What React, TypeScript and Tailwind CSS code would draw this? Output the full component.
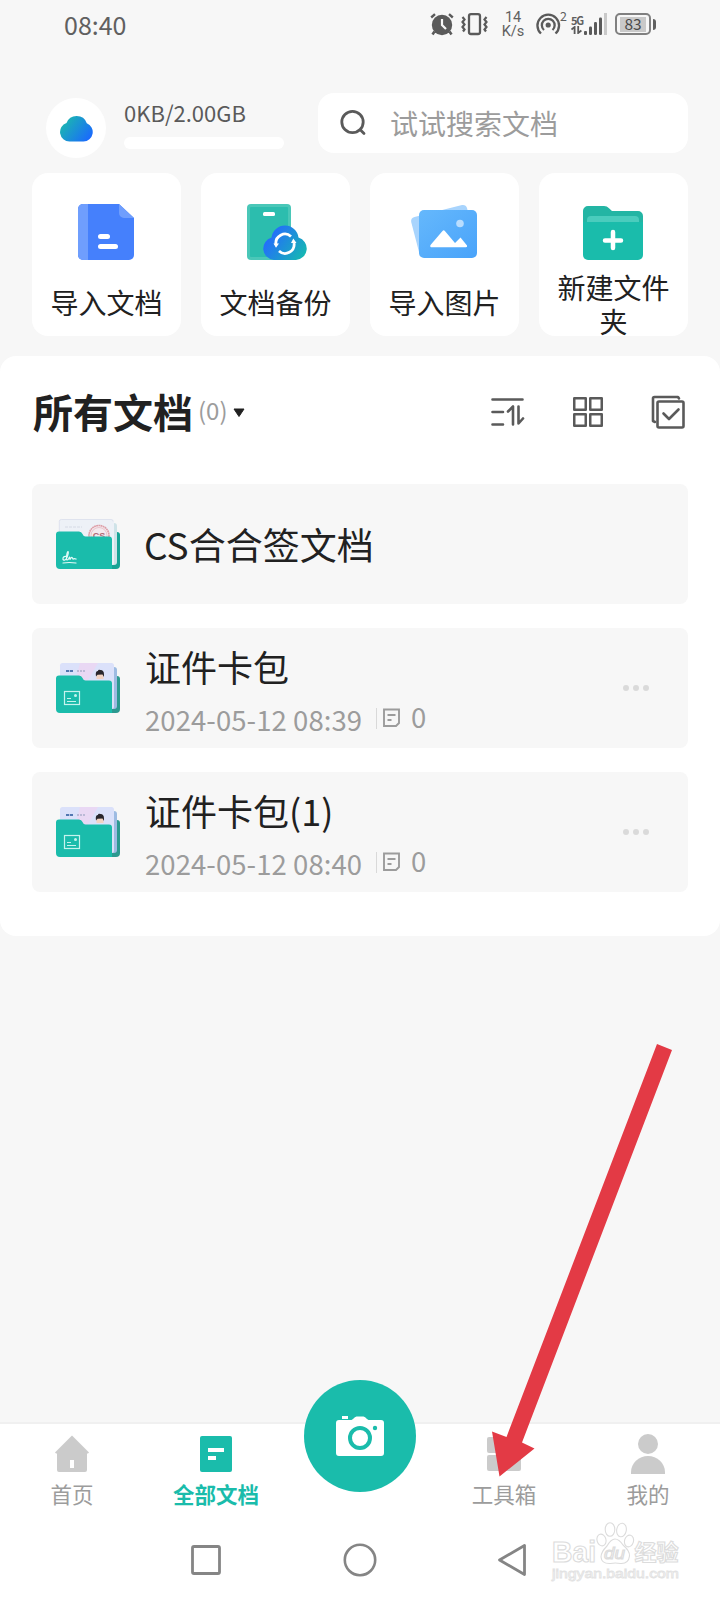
import type { ReactNode } from 'react';

const GREEN = '#1abcab';

function StatusBar() {
  return (
    <header className="flex h-12 items-center justify-between pl-16 pr-[64px] text-[#606060]">
      <span className="text-[25px] leading-none">08:40</span>
      <div className="flex h-12 items-center">
        <svg width="24" height="24" viewBox="0 0 24 24" fill="none" stroke="#5a5a5a">
          <circle cx="12" cy="13" r="10.2" fill="#5a5a5a" stroke="none" />
          <path d="M1.2 5.5 5 2.2M19 2.2l3.8 3.3" strokeWidth="2.4" />
          <path d="m4.5 19.5-2 3M19.5 19.5l2 3" strokeWidth="2.6" />
          <path d="M12 7v6l4 4" stroke="#f7f7f7" strokeWidth="2.2" />
        </svg>
        <svg className="ml-[7px]" width="27" height="24" viewBox="0 0 27 24" fill="none" stroke="#5a5a5a" strokeWidth="2.3">
          <rect x="8" y="2.2" width="11" height="19.8" rx="2" />
          <path d="m1.500 5 2 2.500L1.500 10l2 2.500L1.500 15l2 2.500L2 19.500M25.500 5l-2 2.500 2 2.500-2 2.500 2 2.500-2 2.500 1.500 2" strokeWidth="2.2" />
        </svg>
        <div className="ml-[13px] flex w-[24px] flex-col items-center pt-0.5 font-[Roboto,sans-serif] text-[14.5px] leading-[14px]">
          <span>14</span>
          <span className="whitespace-nowrap">K/s</span>
        </div>
        <svg className="ml-[11px]" width="25" height="24" viewBox="0 0 25 24" fill="none" stroke="#5a5a5a" strokeWidth="2.3">
          <path d="M5 21.5A10.8 10.8 0 1 1 19.5 21.5" />
          <path d="M8 18A6.4 6.4 0 1 1 16.5 18" />
          <circle cx="12.2" cy="13" r="2.6" fill="#5a5a5a" stroke="none" />
        </svg>
        <span className="-ml-px -mt-4 text-[12.5px] leading-none">2</span>
        <div className="ml-[4px] flex w-[13px] flex-col">
          <span className="text-[11px] font-bold leading-[12px] tracking-[-1.2px]">5G</span>
          <svg width="12" height="8" viewBox="0 0 12 8" fill="none" stroke="#5a5a5a" strokeWidth="1.8">
            <path d="M.5 3.5 3.6 1v7M7.2 0v7l3.2-2.5" />
          </svg>
        </div>
        <svg width="23" height="24" viewBox="0 0 23 24" fill="#5a5a5a">
          <rect x="0" y="19" width="3" height="4" rx="1" />
          <rect x="5" y="14.5" width="3" height="8.5" rx="1.2" />
          <rect x="10" y="10" width="3" height="13" rx="1.2" />
          <rect x="15" y="5.500" width="3" height="17.500" rx="1.2" />
          <rect x="20" y="1" width="3" height="22" fill="#c9c9c9" />
        </svg>
        <div className="ml-2 flex h-[22px] w-[36px] items-center justify-center rounded-[5px] border-2 border-[#808080]">
          <span className="flex h-[15px] w-[26px] items-center justify-center bg-[#c9c9c9] text-[15.5px] leading-none text-[#484848]">
            83
          </span>
        </div>
        <div className="ml-0.5 h-[11px] w-[3px] rounded-r bg-[#606060]" />
      </div>
    </header>
  );
}

function TopRow() {
  return (
    <div className="mt-[45px] flex h-[60px] items-start pl-[46px] pr-8">
      <div className="mt-[5px] flex size-[60px] shrink-0 items-center justify-center rounded-full bg-white">
        <svg className="-mt-px" width="33" height="28" viewBox="0 0 33 28">
          <defs>
            <linearGradient id="cloud" x1="0" y1="0.2" x2="1" y2="0.8">
              <stop offset="0" stopColor="#1bbcab" />
              <stop offset="1" stopColor="#1a68ff" />
            </linearGradient>
          </defs>
          <path d="M9.500 27.500A9.500 9.500 0 0 1 6.500 9a10.800 10.800 0 0 1 20.300 0.200A9.500 9.500 0 0 1 23.500 27.500Z" fill="url(#cloud)" />
        </svg>
      </div>
      <div className="ml-[18px] w-[160px]">
        <div className="mt-[7px] whitespace-nowrap text-[22px] leading-6 text-[#5a5a5a]">0KB/2.00GB</div>
        <div className="mt-[13px] h-3 rounded-full bg-white" />
      </div>
      <div className="ml-[34px] flex h-[60px] flex-1 items-center rounded-2xl bg-white pl-[22px]">
        <svg width="28" height="28" viewBox="0 0 28 28" fill="none" stroke="#5a5a5a" strokeWidth="2.8" strokeLinecap="round">
          <circle cx="12.5" cy="13" r="10.7" />
          <path d="m20.5 21 3.5 3.5" />
        </svg>
        <span className="ml-[22px] text-[28px] leading-none text-[#9c9c9c]">试试搜索文档</span>
      </div>
    </div>
  );
}

function ImportDocIcon() {
  return (
    <svg width="64" height="64" viewBox="0 0 64 64">
      <path d="M9 4h36l15 14v37a5 5 0 0 1-5 5H9a5 5 0 0 1-5-5V9a5 5 0 0 1 5-5Z" fill="#4580fc" />
      <path d="M9 4h5v56H9a5 5 0 0 1-5-5V9a5 5 0 0 1 5-5ZM45 4v9a5 5 0 0 0 5 5h10Z" fill="#6f9efd" />
      <rect x="24" y="34" width="12" height="5" rx="2.5" fill="#fff" />
      <rect x="24" y="44" width="20" height="5" rx="2.5" fill="#fff" />
    </svg>
  );
}

function BackupIcon() {
  return (
    <svg width="64" height="64" viewBox="0 0 64 64">
      <defs>
        <linearGradient id="backup" x1="0.1" y1="0.3" x2="1" y2="0.8">
          <stop offset="0" stopColor="#246bfd" />
          <stop offset="1" stopColor="#16b8b2" />
        </linearGradient>
      </defs>
      <rect x="4" y="4" width="44" height="56" rx="4" fill="#4ac7b8" />
      <rect x="7" y="7" width="38" height="50" rx="1" fill="#2cbdae" />
      <rect x="20" y="12" width="12" height="4" rx="1.5" fill="#fff" />
      <path d="M31 60A11.5 11.5 0 0 1 28.5 37.5a13.6 13.6 0 0 1 27 0A11.5 11.5 0 0 1 53 60Z" fill="url(#backup)" />
      <g fill="none" stroke="#fff" strokeWidth="2.8">
        <path d="M48 36.500A9 9 0 0 0 33 44.500M36 51A9 9 0 0 0 51 43" />
      </g>
      <path d="M30.500 43.500h5.500l-3 4.200ZM48 43h5.500l-3.200-4.500Z" fill="#fff" />
    </svg>
  );
}

function ImportImageIcon() {
  return (
    <svg width="72" height="64" viewBox="0 0 72 64">
      <defs>
        <linearGradient id="photo" x1="0" y1="0" x2="1" y2="1">
          <stop offset="0" stopColor="#65b8fc" />
          <stop offset="1" stopColor="#49a3fa" />
        </linearGradient>
      </defs>
      <path d="M11 52 3.200 22Q2.500 18 6.500 17L54 5Q58 4.500 59 8l2 8v36Z" fill="#a8d4fd" />
      <path d="M16 10h48a5 5 0 0 1 5 5v38a5 5 0 0 1-5 5H16a5 5 0 0 1-5-5V15a5 5 0 0 1 5-5Z" fill="url(#photo)" />
      <circle cx="52" cy="23.500" r="3.800" fill="#b9ddfe" />
      <path d="M22.500 45 34.500 31q1.200-1.500 2.400 0L47 43l5.500-5.500L59 45.500q.6 1.800-1 1.800H24q-2.500 0-1.500-2.300Z" fill="#fff" />
    </svg>
  );
}

function NewFolderIcon() {
  return (
    <svg width="64" height="64" viewBox="0 0 64 64">
      <path d="M7 6h16q3 0 5 2.200L31 11h26a5 5 0 0 1 5 5v20H2V11a5 5 0 0 1 5-5Z" fill="#23b5a4" />
      <path d="M10 16h44a4 4 0 0 1 4 4v4H6v-4a4 4 0 0 1 4-4Z" fill="#4accbd" />
      <path d="M2 22h60v33a5 5 0 0 1-5 5H7a5 5 0 0 1-5-5Z" fill={GREEN} />
      <path d="M32 32v16M24 40.500h16" stroke="#fff" strokeWidth="4.5" strokeLinecap="round" />
    </svg>
  );
}

function QuickCard({ icon, label, wrap }: { icon: ReactNode; label: string; wrap?: boolean }) {
  return (
    <div className="flex h-[163px] flex-col items-center rounded-2xl bg-white pt-[27px] text-[#212121]">
      <div className="flex h-16 items-center justify-center pr-px">{icon}</div>
      <div className={`w-[120px] text-center text-[28px] leading-[34px] ${wrap ? 'mt-[6px]' : 'mt-[21px]'}`}>{label}</div>
    </div>
  );
}

function SortIcon() {
  return (
    <svg width="34" height="32" viewBox="0 0 34 32" fill="none" stroke="#5a5a5a" strokeWidth="2.6" strokeLinecap="round" strokeLinejoin="round">
      <path d="M1.500 3.500h30M1.500 16H12M1.500 28.500H12" />
      <path d="m17 15.500 5-5v18M27.500 10.500v17l4.500-5" />
    </svg>
  );
}

function GridIcon() {
  return (
    <svg width="30" height="30" viewBox="0 0 30 30" fill="none" stroke="#5a5a5a" strokeWidth="2.5" strokeLinejoin="round">
      <rect x="1.250" y="1.250" width="11.500" height="11.500" />
      <rect x="17.250" y="1.250" width="11.500" height="11.500" />
      <rect x="1.250" y="17.250" width="11.500" height="11.500" />
      <rect x="17.250" y="17.250" width="11.500" height="11.500" />
    </svg>
  );
}

function SelectIcon() {
  return (
    <svg width="34" height="34" viewBox="0 0 34 34" fill="none" stroke="#5a5a5a" strokeWidth="2.6" strokeLinecap="round" strokeLinejoin="round">
      <path d="M28 3.500 27 2H3.500Q2 2 2 3.500V26l2 1" />
      <rect x="6.500" y="6.500" width="26" height="26" rx="1.500" />
      <path d="m12.500 18.500 5.500 5.500 9.500-9.500" />
    </svg>
  );
}

function FolderIcon({ kind }: { kind: 'sign' | 'card' }) {
  const sign = kind === 'sign';
  return (
    <svg className="shrink-0" width="64" height="52" viewBox="0 0 64 52">
      <path d="M50 14h11a3 3 0 0 1 3 3v30a4 4 0 0 1-4 4H40Z" fill={sign ? '#18a395' : '#2c9990'} />
      <rect x="30" y="5" width="31" height="42" rx="3" fill={sign ? '#cfe3e8' : '#9dbbe2'} />
      <rect x={sign ? 3 : 4} y="1" width={sign ? 55 : 54} height="46" rx="2.500" fill={sign ? '#edf1f7' : '#dbe1fa'} />
      {sign ? (
        <g>
          <path d="M3.300 20V3.500a2 2 0 0 1 2-2H55a2 2 0 0 1 2 2" fill="none" stroke="#dfe3ee" />
          <path d="M9 9h17" stroke="#d5dae5" strokeDasharray="3 1" />
          <circle cx="43" cy="17.500" r="10" fill="#f4e9ee" stroke="#dd9fa8" strokeWidth="1.600" strokeDasharray="1.800 .4" />
          <circle cx="43" cy="17.500" r="8" fill="none" stroke="#e2b3bb" strokeWidth=".7" />
          <text x="43" y="20.500" textAnchor="middle" fontSize="9" fontWeight="700" fill="#b06a76" fontFamily="Liberation Sans, sans-serif">CS</text>
        </g>
      ) : (
        <g>
          <path d="M24 1h18L31 20H19Z" fill="#e9d8f4" />
          <path d="M10 9h7" stroke="#5277b1" strokeWidth="2.200" strokeDasharray="3.200 .7" />
          <path d="M21 9h8" stroke="#bbb9d6" strokeWidth="2" strokeDasharray="2 1" />
          <path d="M40.500 11h7v6h-7Z" fill="#f2d3c3" />
          <path d="M40 14.500q-1-5.500 2-5.500 0-2 2.500-1 3.500 0 3.500 4.500v2.500l-1.500-2.500-5 .2Z" fill="#29262d" />
        </g>
      )}
      <path d="M3 13.500h20q2.500 0 3.500 2.500 1 2.500 3 2.500H53q3 0 3 3V51H4q-4 0-4-4V16.500q0-3 3-3Z" fill={GREEN} />
      {sign ? (
        <g fill="none" stroke="#e4fbf8" strokeWidth="1.200" strokeLinecap="round" strokeLinejoin="round">
          <path d="M10.500 38.500q-4-.5-3.500 3 2 2 4-2 2-5 1-6-1.500 1-1.500 8 1.500 1.500 3-2.500 .5 1 .5 2.500 1.500-3 2.500-1.500 .5 2 1.500 .5 1 .5 2.200 .5" />
          <path d="M7 45q6-1 13 0" />
        </g>
      ) : (
        <g fill="none" stroke="#c5f3ed" strokeWidth="1.200">
          <rect x="8.500" y="29.500" width="15" height="13" />
          <path d="M11 36.500h4M11 39.500h9" />
          <circle cx="19.500" cy="33.500" r="1.500" fill="#c5f3ed" stroke="none" />
        </g>
      )}
    </svg>
  );
}

function FolderRow({ name, date }: { name: string; date: string }) {
  return (
    <div className="flex h-[120px] rounded-lg bg-[#f7f7f7] pl-6">
      <div className="pt-[34px]">
        <FolderIcon kind="card" />
      </div>
      <div className="ml-[25px] flex-1">
        <div className="mt-[18px] text-[36px] leading-[40px] text-[#212121]">{name}</div>
        <div className="mt-[14px] flex h-8 text-[27.5px] leading-8 text-[#9c9c9c]">
          <span className="w-[231px] whitespace-nowrap pt-[3px] tracking-[0.07px]">{date}</span>
          <span className="mt-[8px] h-[21px] w-px bg-[#d9d9d9]" />
          <svg className="ml-1.5 mt-[8px]" width="18" height="20" viewBox="0 0 18 20" fill="none" stroke="#9c9c9c" strokeWidth="1.900">
            <path d="M1 1.500h15v13.500l-3 3H1ZM4.500 7h8M4.500 12h4" />
          </svg>
          <span className="ml-[10px]">0</span>
        </div>
      </div>
      <div className="mr-[39px] flex items-center gap-1 self-center">
        <i className="size-1.5 rounded-full bg-[#dadada]" />
        <i className="size-1.5 rounded-full bg-[#dadada]" />
        <i className="size-1.5 rounded-full bg-[#dadada]" />
      </div>
    </div>
  );
}

function DocumentsPanel() {
  return (
    <section className="mt-5 h-[580px] rounded-2xl bg-white px-8">
      <div className="flex h-[128px] items-center pb-[17px]">
        <h1 className="-mt-0.5 ml-px text-[40px] font-bold leading-none text-[#212121]">所有文档</h1>
        <span className="-mt-[3px] ml-[5px] text-[24px] leading-none text-[#9c9c9c]">(0)</span>
        <svg className="ml-[5px] mt-0.5" width="12" height="10" viewBox="0 0 12 10">
          <path d="M1 1h10L6 8.500Z" fill="#212121" stroke="#212121" strokeLinejoin="round" />
        </svg>
        <div className="ml-auto flex items-center pr-[3px]">
          <SortIcon />
          <div className="ml-[48px]">
            <GridIcon />
          </div>
          <div className="ml-[48px]">
            <SelectIcon />
          </div>
        </div>
      </div>
      <div className="flex flex-col gap-6">
        <div className="flex h-[120px] rounded-lg bg-[#f7f7f7] pl-6">
          <div className="pt-[34px]">
            <FolderIcon kind="sign" />
          </div>
          <div className="ml-[24px] text-[37px] leading-[120px] text-[#212121]">CS合合签文档</div>
        </div>
        <FolderRow name="证件卡包" date="2024-05-12 08:39" />
        <FolderRow name="证件卡包(1)" date="2024-05-12 08:40" />
      </div>
    </section>
  );
}

function Tab({ icon, label, active }: { icon: ReactNode; label: string; active?: boolean }) {
  return (
    <div className={`flex w-36 flex-col items-center pt-[8px] ${active ? 'font-bold text-[#1abcab]' : 'text-[#9c9c9c]'}`}>
      {icon}
      <span className="mt-[6px] text-[21.5px] leading-6">{label}</span>
    </div>
  );
}

function TabBar() {
  return (
    <nav className="flex h-[100px] border-t-2 border-[#f0f0f0] bg-white">
      <Tab
        label="首页"
        icon={
          <svg width="44" height="44" viewBox="0 0 44 44" fill="#cbcbcb">
            <path d="M22 3.500 39 20.500l-1 1H37V38a2 2 0 0 1-2 2H9a2 2 0 0 1-2-2V21.500H6l-1-1Z" />
            <path d="M20 28h4v8h-4Z" fill="#fff" />
          </svg>
        }
      />
      <Tab
        active
        label="全部文档"
        icon={
          <svg width="44" height="44" viewBox="0 0 44 44">
            <rect x="6" y="4" width="32" height="36" rx="2" fill={GREEN} />
            <path d="M14 18h16M14 26h8" stroke="#fff" strokeWidth="4" />
          </svg>
        }
      />
      <div className="-mt-[44px] flex w-36 justify-center">
        <div className="flex size-28 items-center justify-center rounded-full bg-[#1abcab]">
          <svg width="48" height="40" viewBox="0 0 48 40">
            <path d="M6 0h6v3H6ZM17 3q2-2.500 3.500-2.500h7Q29 .500 31 3l1.500 1H45a3 3 0 0 1 3 3v30a3 3 0 0 1-3 3H3a3 3 0 0 1-3-3V7a3 3 0 0 1 3-3h12.500Z" fill="#fff" />
            <circle cx="24" cy="22" r="10" fill="none" stroke={GREEN} strokeWidth="4" />
            <circle cx="39" cy="12" r="2.200" fill={GREEN} />
          </svg>
        </div>
      </div>
      <Tab
        label="工具箱"
        icon={
          <svg width="44" height="44" viewBox="0 0 44 44" fill="#cbcbcb">
            <rect x="5" y="5" width="16" height="16" rx="2" />
            <rect x="23" y="5" width="16" height="16" rx="8" />
            <rect x="5" y="23" width="16" height="16" rx="2" />
            <rect x="23" y="23" width="16" height="16" rx="2" />
          </svg>
        }
      />
      <Tab
        label="我的"
        icon={
          <svg width="44" height="44" viewBox="0 0 44 44" fill="#cbcbcb">
            <circle cx="22" cy="12" r="10" />
            <path d="M5 42V40a17 16 0 0 1 34 0v2Z" />
          </svg>
        }
      />
    </nav>
  );
}

function SystemBar() {
  return (
    <footer className="flex flex-1 bg-white pt-[20px]">
      <svg className="ml-[189px]" width="34" height="36" viewBox="0 0 34 36" fill="none" stroke="#858585" strokeWidth="2.800">
        <rect x="3.500" y="4.500" width="27" height="27" rx="1.500" />
      </svg>
      <svg className="ml-[119px]" width="36" height="36" viewBox="0 0 36 36" fill="none" stroke="#858585" strokeWidth="2.600">
        <circle cx="18" cy="18" r="15.200" />
      </svg>
      <svg className="ml-[118px]" width="34" height="36" viewBox="0 0 34 36" fill="none" stroke="#858585" strokeWidth="2.800" strokeLinejoin="round">
        <path d="M28.500 3.500v29L3.500 18Z" />
      </svg>
    </footer>
  );
}

function Watermark() {
  return (
    <svg className="absolute left-[550px] top-[1518px]" width="136" height="68" viewBox="0 0 136 68" fill="#fff" stroke="#dcdcdc" fontFamily="Liberation Sans, sans-serif">
      <g strokeWidth="1.100">
        <text x="2" y="44" fontSize="29" fontWeight="700" textLength="44" lengthAdjust="spacingAndGlyphs">Bai</text>
        <text x="84.500" y="42" fontSize="22" fontWeight="700" fontFamily="Noto Sans CJK SC, sans-serif">经验</text>
        <ellipse cx="51.500" cy="22" rx="4.500" ry="6" transform="rotate(-15 51.500 22)" />
        <ellipse cx="60" cy="11.500" rx="4.800" ry="6.800" />
        <ellipse cx="71.500" cy="12" rx="4.800" ry="6.800" transform="rotate(10 71.500 12)" />
        <ellipse cx="79" cy="23" rx="4.500" ry="6" transform="rotate(15 79 23)" />
        <path d="M65 21q4 0 8 6 7 6 6.500 11-1 8-9 7.500-5.500-1-10 0-9 .5-9.500-6.500 0-5 6-11 4-7 8-7Z" />
        <text x="54" y="41" fontSize="17" fontStyle="italic" textLength="21" lengthAdjust="spacingAndGlyphs">du</text>
      </g>
      <text x="2" y="60" fontSize="13" stroke="#e2e2e2" strokeWidth=".8" textLength="127" lengthAdjust="spacingAndGlyphs">jingyan.baidu.com</text>
    </svg>
  );
}

export default function App() {
  return (
    <div className="relative flex h-[1600px] w-[720px] flex-col overflow-hidden bg-[#f7f7f7] font-['Noto_Sans_CJK_SC',sans-serif]">
      <StatusBar />
      <TopRow />
      <div className="mt-5 grid grid-cols-4 gap-5 px-8">
        <QuickCard icon={<ImportDocIcon />} label="导入文档" />
        <QuickCard icon={<BackupIcon />} label="文档备份" />
        <QuickCard icon={<ImportImageIcon />} label="导入图片" />
        <QuickCard icon={<NewFolderIcon />} label="新建文件夹" wrap />
      </div>
      <DocumentsPanel />
      <div className="h-[486px]" />
      <TabBar />
      <SystemBar />
      <svg className="absolute left-[480px] top-[1030px]" width="210" height="460" viewBox="480 1030 210 460">
        <path d="M657 1044 672 1050 522 1442.500 534.500 1448.500 499.500 1476.500 492 1431.500 506.500 1437Z" fill="#e33a45" />
      </svg>
      <Watermark />
    </div>
  );
}
